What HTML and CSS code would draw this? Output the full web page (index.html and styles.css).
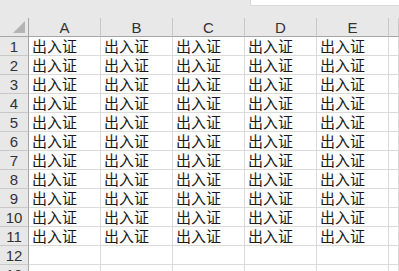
FILE: index.html
```html
<!DOCTYPE html>
<html>
<head>
<meta charset="utf-8">
<link rel="stylesheet" href="styles.css">
</head>
<body>
<div class="top"><div class="fbox"></div></div>
<div class="sheet">
  <div class="hdr corner"><svg width="12" height="12" viewBox="0 0 12 12"><polygon points="12,0 12,12 0,12" fill="#b4b4b4"/></svg></div>
  <div class="hdr col">A</div><div class="hdr col">B</div><div class="hdr col">C</div><div class="hdr col">D</div><div class="hdr col">E</div><div class="hdr col last"></div>

  <div class="hdr row">1</div><div class="c">出入证</div><div class="c">出入证</div><div class="c">出入证</div><div class="c">出入证</div><div class="c">出入证</div><div class="c"></div>
  <div class="hdr row">2</div><div class="c">出入证</div><div class="c">出入证</div><div class="c">出入证</div><div class="c">出入证</div><div class="c">出入证</div><div class="c"></div>
  <div class="hdr row">3</div><div class="c">出入证</div><div class="c">出入证</div><div class="c">出入证</div><div class="c">出入证</div><div class="c">出入证</div><div class="c"></div>
  <div class="hdr row">4</div><div class="c">出入证</div><div class="c">出入证</div><div class="c">出入证</div><div class="c">出入证</div><div class="c">出入证</div><div class="c"></div>
  <div class="hdr row">5</div><div class="c">出入证</div><div class="c">出入证</div><div class="c">出入证</div><div class="c">出入证</div><div class="c">出入证</div><div class="c"></div>
  <div class="hdr row">6</div><div class="c">出入证</div><div class="c">出入证</div><div class="c">出入证</div><div class="c">出入证</div><div class="c">出入证</div><div class="c"></div>
  <div class="hdr row">7</div><div class="c">出入证</div><div class="c">出入证</div><div class="c">出入证</div><div class="c">出入证</div><div class="c">出入证</div><div class="c"></div>
  <div class="hdr row">8</div><div class="c">出入证</div><div class="c">出入证</div><div class="c">出入证</div><div class="c">出入证</div><div class="c">出入证</div><div class="c"></div>
  <div class="hdr row">9</div><div class="c">出入证</div><div class="c">出入证</div><div class="c">出入证</div><div class="c">出入证</div><div class="c">出入证</div><div class="c"></div>
  <div class="hdr row">10</div><div class="c">出入证</div><div class="c">出入证</div><div class="c">出入证</div><div class="c">出入证</div><div class="c">出入证</div><div class="c"></div>
  <div class="hdr row">11</div><div class="c">出入证</div><div class="c">出入证</div><div class="c">出入证</div><div class="c">出入证</div><div class="c">出入证</div><div class="c"></div>
  <div class="hdr row">12</div><div class="c"></div><div class="c"></div><div class="c"></div><div class="c"></div><div class="c"></div><div class="c"></div>
  <div class="hdr row">13</div><div class="c"></div><div class="c"></div><div class="c"></div><div class="c"></div><div class="c"></div><div class="c"></div>
</div>
</body>
</html>
```
FILE: styles.css
```css
html, body {
  margin: 0;
  padding: 0;
  background: #fff;
  overflow: hidden;
  width: 399px;
  height: 271px;
}
.top {
  height: 18px;
  background: #e8e8e8;
  display: flex;
  justify-content: flex-end;
}
.fbox {
  width: 148px;
  height: 5px;
  background: #fff;
  border-left: 1px solid #d8d8d8;
  border-bottom: 1px solid #d8d8d8;
}
.sheet {
  display: grid;
  grid-template-columns: 29px 72px 72px 72px 72px 72px 1fr;
  grid-template-rows: 19px repeat(13, 19px);
}
.sheet > div {
  box-sizing: border-box;
}
.hdr {
  background: #e8e8e8;
  color: #333;
  font-family: "Liberation Sans", Arial, sans-serif;
  font-size: 15px;
  display: flex;
  align-items: center;
  justify-content: center;
}
.col {
  border-right: 1px solid #c8c8c8;
  border-bottom: 1px solid #a6a6a6;
  padding-top: 1px;
}
.corner {
  border-right: 1px solid #a6a6a6;
  border-bottom: 1px solid #a6a6a6;
  justify-content: flex-end;
  align-items: flex-end;
  padding: 0 3px 3px 0;
}
.corner svg { display: block; }
.row {
  border-right: 1px solid #a6a6a6;
  border-bottom: 1px solid #c8c8c8;
  padding-top: 1px;
}
.c {
  border-right: 1px solid #dadada;
  border-bottom: 1px solid #dadada;
  font-family: "Noto Sans CJK SC", sans-serif;
  font-size: 15px;
  line-height: 18px;
  color: #1a1a1a;
  padding-left: 3px;
  white-space: nowrap;
}
```
